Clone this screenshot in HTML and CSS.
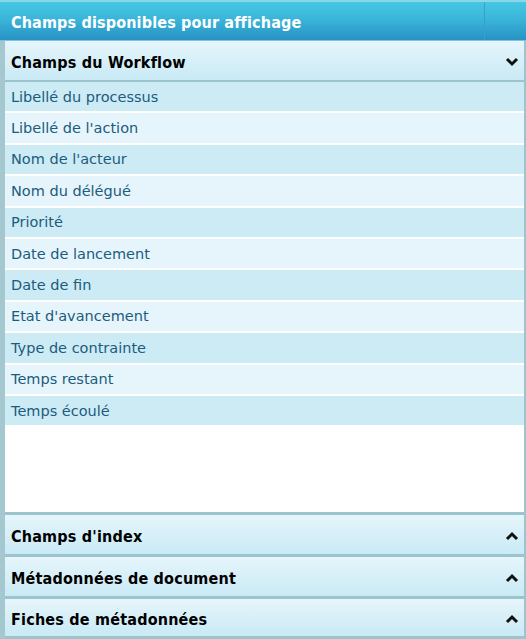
FILE: index.html
```html
<!DOCTYPE html>
<html lang="fr">
<head>
<meta charset="utf-8">
<title>Champs disponibles pour affichage</title>
<link rel="stylesheet" href="styles.css">
</head>
<body>
<div class="panel">
  <div class="titlebar">
    <div class="title">Champs disponibles pour affichage</div>
    <div class="title-cell"></div>
  </div>
  <div class="body">
    <div class="section open">
      <div class="head">
        <span class="head-label">Champs du Workflow</span>
        <svg class="chev" width="14" height="10" viewBox="0 0 14 10"><polyline points="2,2 7,7 12,2" fill="none" stroke="#111" stroke-width="3"/></svg>
      </div>
      <div class="list">
        <div class="row odd">Libellé du processus</div>
        <div class="row even">Libellé de l'action</div>
        <div class="row odd">Nom de l'acteur</div>
        <div class="row even">Nom du délégué</div>
        <div class="row odd">Priorité</div>
        <div class="row even">Date de lancement</div>
        <div class="row odd">Date de fin</div>
        <div class="row even">Etat d'avancement</div>
        <div class="row odd">Type de contrainte</div>
        <div class="row even">Temps restant</div>
        <div class="row odd">Temps écoulé</div>
      </div>
      <div class="filler"></div>
    </div>
    <div class="section">
      <div class="head">
        <span class="head-label">Champs d'index</span>
        <svg class="chev" width="14" height="10" viewBox="0 0 14 10"><polyline points="2,8 7,3 12,8" fill="none" stroke="#111" stroke-width="3"/></svg>
      </div>
    </div>
    <div class="section">
      <div class="head">
        <span class="head-label">Métadonnées de document</span>
        <svg class="chev" width="14" height="10" viewBox="0 0 14 10"><polyline points="2,8 7,3 12,8" fill="none" stroke="#111" stroke-width="3"/></svg>
      </div>
    </div>
    <div class="section last">
      <div class="head last-head">
        <span class="head-label">Fiches de métadonnées</span>
        <svg class="chev" width="14" height="10" viewBox="0 0 14 10"><polyline points="2,8 7,3 12,8" fill="none" stroke="#111" stroke-width="3"/></svg>
      </div>
    </div>
  </div>
</div>
</body>
</html>
```
FILE: styles.css
```css
html, body {
  margin: 0;
  padding: 0;
  background: #ffffff;
}
body {
  font-family: "DejaVu Sans", sans-serif;
  overflow: hidden;
}
*, *::before, *::after {
  box-sizing: border-box;
}
.panel {
  width: 526px;
  height: 639px;
  display: flex;
  flex-direction: column;
  overflow: hidden;
}
.titlebar {
  height: 41px;
  flex: 0 0 auto;
  display: flex;
  align-items: stretch;
  border-top: 2px solid #8ad6ea;
  border-bottom: 1px solid #7cc2da;
  background: linear-gradient(to bottom, #46c7e3 0%, #3ab5da 45%, #2892c3 100%);
}
.title {
  flex: 1;
  display: flex;
  align-items: center;
  padding-left: 11px;
  padding-top: 2px;
  color: #ffffff;
  font-family: "DejaVu Sans Condensed", "DejaVu Sans", sans-serif;
  font-weight: bold;
  font-size: 16px;
  letter-spacing: 0.15px;
}
.title-cell {
  width: 42px;
  border-left: 1px solid #3a9fc8;
}
.body {
  flex: 0 0 auto;
  display: flex;
  flex-direction: column;
  border-left: 5px solid #a5c7cf;
  border-right: 2px solid #9cc6cd;
}
.section {
  flex: 0 0 auto;
  display: flex;
  flex-direction: column;
  border-bottom: 3px solid #9cc4cc;
}
.head {
  height: 39px;
  flex: 0 0 auto;
  display: flex;
  align-items: center;
  justify-content: space-between;
  padding-left: 6px;
  padding-right: 5px;
  padding-top: 3px;
  background: linear-gradient(to bottom, #e6f5fb 0%, #c9eaf5 100%);
  font-family: "DejaVu Sans Condensed", "DejaVu Sans", sans-serif;
  font-weight: bold;
  font-size: 16px;
  letter-spacing: 0.2px;
  color: #000000;
}
.last-head {
  height: 37px;
}
.open .head {
  height: 41px;
  border-bottom: 2px solid #9bc4cc;
}
.list {
  display: flex;
  flex-direction: column;
  gap: 2px;
  background: #ffffff;
}
.row {
  height: 29.4px;
  display: flex;
  align-items: center;
  padding-left: 6px;
  font-size: 14.5px;
  color: #1b5c7e;
}
.row.odd {
  background: #cdebf5;
}
.row.even {
  background: #e6f5fb;
}
.filler {
  height: 87px;
  background: #ffffff;
}
.chev {
  display: block;
}
```
